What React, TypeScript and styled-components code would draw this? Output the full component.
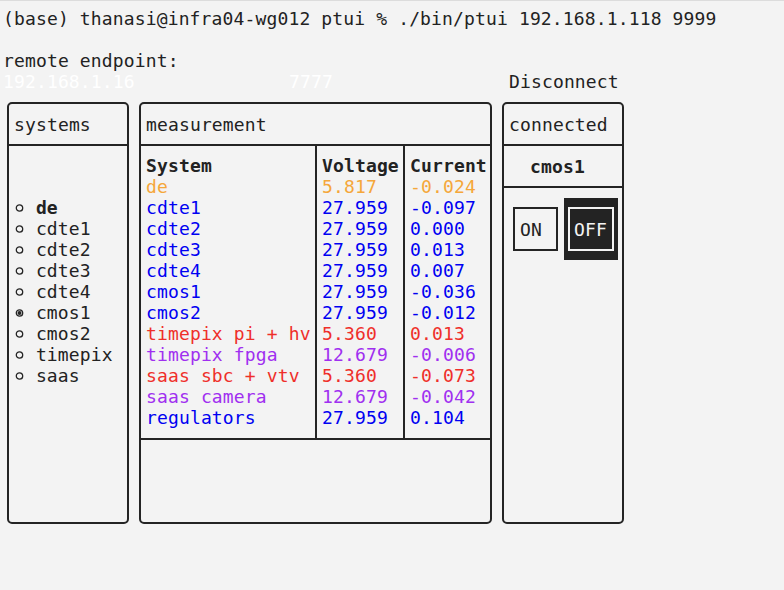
import React from "react";
import styled, { createGlobalStyle } from "styled-components";

const GlobalStyle = createGlobalStyle`
  html, body { margin: 0; padding: 0; background: #f3f3f3; }
  body {
    font-family: "DejaVu Sans Mono", "Liberation Mono", monospace;
    font-size: 18px;
    line-height: 21px;
    letter-spacing: 0.14px;
    color: #222222;
  }
`;

const INK = "#242424";

const palette: Record<string, string> = {
  orange: "#f5a73a",
  blue: "#0000f2",
  red: "#ef2f2a",
  purple: "#a02ff0",
};

const Screen = styled.div`
  width: 784px;
  height: 590px;
  box-sizing: border-box;
  border-top: 1px solid #dcdcdc;
  padding: 7px 0 0 3px;
  overflow: hidden;
`;

const Line = styled.div`
  height: 21px;
  white-space: pre;
`;

const EndpointRow = styled.div`
  display: flex;
  height: 21px;
  white-space: pre;
`;

const Field = styled.span<{ $width: number }>`
  flex: none;
  width: ${(p) => p.$width}px;
  color: #ffffff;
`;

const Action = styled.span`
  color: #222222;
`;

const Panels = styled.div`
  display: flex;
  gap: 10px;
  margin: 10px 0 0 4px;
  height: 422px;
`;

const Panel = styled.section<{ $width: number }>`
  flex: none;
  width: ${(p) => p.$width}px;
  box-sizing: border-box;
  border: 2px solid ${INK};
  border-radius: 5px;
  display: flex;
  flex-direction: column;
`;

const PanelTitle = styled.div<{ $pad?: number }>`
  height: 40px;
  flex: none;
  display: flex;
  align-items: center;
  padding-left: ${(p) => p.$pad ?? 5}px;
  border-bottom: 2px solid ${INK};
`;

const SystemList = styled.ul`
  list-style: none;
  margin: 0;
  padding: 51px 0 0 5px;
`;

const SystemItem = styled.li<{ $bold?: boolean }>`
  display: flex;
  align-items: center;
  height: 21px;
  font-weight: ${(p) => (p.$bold ? 700 : 400)};
`;

const RadioMark = styled.span`
  flex: none;
  width: 21.9px;
  height: 21px;
  display: flex;
  align-items: center;
`;

const Radio = ({ checked }: { checked?: boolean }) => (
  <RadioMark>
    <svg width="10" height="10" viewBox="0 0 10 10" style={{ marginLeft: 0.5 }}>
      <circle cx="4.5" cy="5" r="3.2" fill="none" stroke={INK} strokeWidth="1.3" />
      {checked && <circle cx="4.5" cy="5" r="2" fill={INK} />}
    </svg>
  </RadioMark>
);

const Table = styled.div`
  display: grid;
  grid-template-columns: 176px 88px 1fr;
  height: 292px;
  flex: none;
  border-bottom: 2px solid ${INK};
`;

const Column = styled.div<{ $last?: boolean; $pad: number }>`
  padding: 9px 0 0 ${(p) => p.$pad}px;
  border-right: ${(p) => (p.$last ? "none" : `2px solid ${INK}`)};
  white-space: pre;
  overflow: hidden;
`;

const HeadCell = styled.div`
  height: 21px;
  font-weight: 700;
`;

const Cell = styled.div<{ $tone: string }>`
  height: 21px;
  color: ${(p) => palette[p.$tone]};
`;

const Selected = styled.div`
  height: 40px;
  flex: none;
  display: flex;
  align-items: center;
  padding-left: 26px;
  font-weight: 700;
  border-bottom: 2px solid ${INK};
`;

const Buttons = styled.div`
  display: flex;
  align-items: center;
  gap: 6px;
  padding: 10px 0 0 9px;
`;

const OnButton = styled.div`
  box-sizing: border-box;
  width: 45px;
  height: 44px;
  border: 2px solid ${INK};
  padding: 0 4px 0 5px;
  display: flex;
  align-items: center;
`;

const OffFrame = styled.div`
  background: #232323;
  padding: 9px 4px;
`;

const OffButton = styled.div`
  box-sizing: border-box;
  width: 46px;
  height: 44px;
  border: 2px solid #f3f3f3;
  color: #f3f3f3;
  padding: 0 4px;
  display: flex;
  align-items: center;
`;

const systems = ["de", "cdte1", "cdte2", "cdte3", "cdte4", "cmos1", "cmos2", "timepix", "saas"];

type Row = { name: string; v: string; c: string; tone: string };
const rows: Row[] = [
  { name: "de", v: "5.817", c: "-0.024", tone: "orange" },
  { name: "cdte1", v: "27.959", c: "-0.097", tone: "blue" },
  { name: "cdte2", v: "27.959", c: "0.000", tone: "blue" },
  { name: "cdte3", v: "27.959", c: "0.013", tone: "blue" },
  { name: "cdte4", v: "27.959", c: "0.007", tone: "blue" },
  { name: "cmos1", v: "27.959", c: "-0.036", tone: "blue" },
  { name: "cmos2", v: "27.959", c: "-0.012", tone: "blue" },
  { name: "timepix pi + hv", v: "5.360", c: "0.013", tone: "red" },
  { name: "timepix fpga", v: "12.679", c: "-0.006", tone: "purple" },
  { name: "saas sbc + vtv", v: "5.360", c: "-0.073", tone: "red" },
  { name: "saas camera", v: "12.679", c: "-0.042", tone: "purple" },
  { name: "regulators", v: "27.959", c: "0.104", tone: "blue" },
];

export default function App() {
  return (
    <>
      <GlobalStyle />
      <Screen>
        <Line>(base) thanasi@infra04-wg012 ptui % ./bin/ptui 192.168.1.118 9999</Line>
        <Line />
        <Line>remote endpoint:</Line>
        <EndpointRow>
          <Field $width={286}>192.168.1.16</Field>
          <Field $width={220}>7777</Field>
          <Action>Disconnect</Action>
        </EndpointRow>
        <Panels>
          <Panel $width={122}>
            <PanelTitle>systems</PanelTitle>
            <SystemList>
              {systems.map((s) => (
                <SystemItem key={s} $bold={s === "de"}>
                  <Radio checked={s === "cmos1"} />
                  {s}
                </SystemItem>
              ))}
            </SystemList>
          </Panel>
          <Panel $width={353}>
            <PanelTitle>measurement</PanelTitle>
            <Table>
              <Column $pad={5}>
                <HeadCell>System</HeadCell>
                {rows.map((r) => (
                  <Cell key={r.name} $tone={r.tone}>{r.name}</Cell>
                ))}
              </Column>
              <Column $pad={5}>
                <HeadCell>Voltage</HeadCell>
                {rows.map((r) => (
                  <Cell key={r.name} $tone={r.tone}>{r.v}</Cell>
                ))}
              </Column>
              <Column $pad={5} $last>
                <HeadCell>Current</HeadCell>
                {rows.map((r) => (
                  <Cell key={r.name} $tone={r.tone}>{r.c}</Cell>
                ))}
              </Column>
            </Table>
          </Panel>
          <Panel $width={122}>
            <PanelTitle $pad={5}>connected</PanelTitle>
            <Selected>cmos1</Selected>
            <Buttons>
              <OnButton>ON</OnButton>
              <OffFrame>
                <OffButton>OFF</OffButton>
              </OffFrame>
            </Buttons>
          </Panel>
        </Panels>
      </Screen>
    </>
  );
}
